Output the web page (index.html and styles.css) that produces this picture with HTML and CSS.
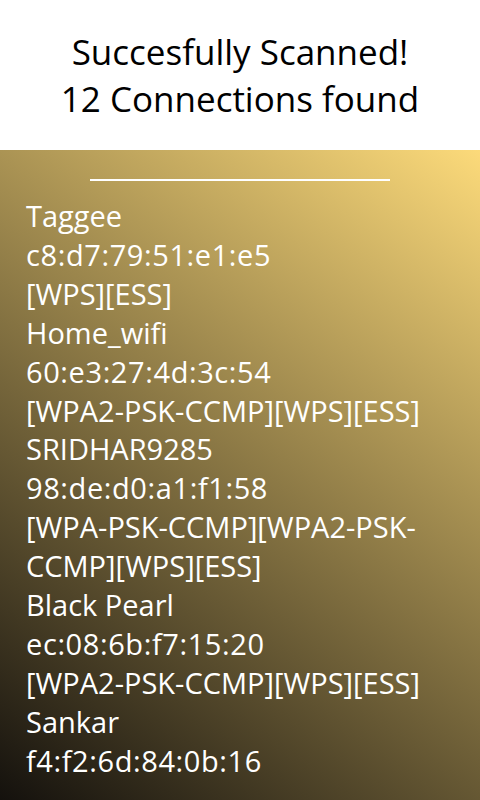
FILE: index.html
```html
<!DOCTYPE html>
<html>
<head>
<meta charset="utf-8">
<link rel="stylesheet" href="styles.css">
</head>
<body>
<div class="screen">
  <header class="header">
    <div class="title">Succesfully Scanned!</div>
    <div class="title">12 Connections found</div>
  </header>
  <main class="panel">
    <div class="divider"></div>
    <div class="list">
      <div class="line">Taggee</div>
      <div class="line mac">c8:d7:79:51:e1:e5</div>
      <div class="line">[WPS][ESS]</div>
      <div class="line">Home_wifi</div>
      <div class="line mac">60:e3:27:4d:3c:54</div>
      <div class="line">[WPA2-PSK-CCMP][WPS][ESS]</div>
      <div class="line">SRIDHAR9285</div>
      <div class="line mac">98:de:d0:a1:f1:58</div>
      <div class="line">[WPA-PSK-CCMP][WPA2-PSK-CCMP][WPS][ESS]</div>
      <div class="line">Black Pearl</div>
      <div class="line mac">ec:08:6b:f7:15:20</div>
      <div class="line">[WPA2-PSK-CCMP][WPS][ESS]</div>
      <div class="line">Sankar</div>
      <div class="line mac">f4:f2:6d:84:0b:16</div>
    </div>
  </main>
</div>
</body>
</html>
```

FILE: styles.css
```css
html, body {
  margin: 0;
  padding: 0;
}
body {
  width: 480px;
  height: 800px;
  overflow: hidden;
  font-family: "Open Sans", "Noto Sans", sans-serif;
}
.screen {
  display: flex;
  flex-direction: column;
  height: 800px;
}
.header {
  height: 150px;
  box-sizing: border-box;
  padding-top: 28px;
  background: #ffffff;
  text-align: center;
  color: #000000;
  font-size: 35px;
  line-height: 47px;
}
.panel {
  flex: 1;
  box-sizing: border-box;
  padding: 29px 26px 0 26px;
  background: linear-gradient(216deg, #fcda7a 0%, #14110d 100%);
  overflow: hidden;
}
.divider {
  width: 300px;
  height: 2px;
  margin: 0 auto;
  background: #ffffff;
}
.list {
  margin-top: 16px;
  color: #ffffff;
  font-size: 29px;
  line-height: 38.9px;
}
.mac {
  letter-spacing: 0.6px;
}
```
